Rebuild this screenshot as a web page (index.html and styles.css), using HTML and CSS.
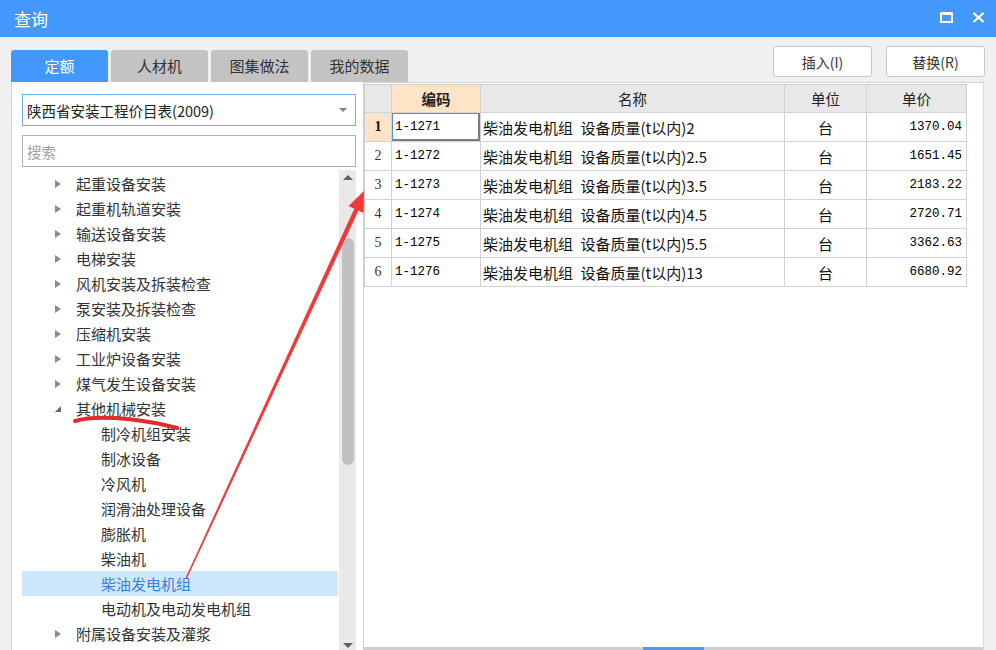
FILE: index.html
```html
<!DOCTYPE html>
<html lang="zh">
<head>
<meta charset="utf-8">
<title>查询</title>
<link rel="stylesheet" href="styles.css">
</head>
<body>
<div class="titlebar">
  <span class="title">查询</span>
  <div class="winctl">
    <svg class="ico-max" width="13" height="11" viewBox="0 0 13 11"><path d="M1 1.5H12V10H1Z" fill="none" stroke="#fff" stroke-width="2"/><path d="M1 1.5H12" stroke="#fff" stroke-width="3"/></svg>
    <svg class="ico-close" width="13" height="11" viewBox="0 0 13 11"><path d="M1.5 1L11.5 10M11.5 1L1.5 10" stroke="#fff" stroke-width="2.3"/></svg>
  </div>
</div>
<div class="main">
  <div class="toprow">
    <div class="tabs">
      <div class="tab active">定额</div>
      <div class="tab">人材机</div>
      <div class="tab">图集做法</div>
      <div class="tab">我的数据</div>
    </div>
    <div class="actions">
      <button class="btn">插入(I)</button>
      <button class="btn">替换(R)</button>
    </div>
  </div>
  <div class="content">
    <div class="leftpanel">
      <div class="select"><span class="select-text">陕西省安装工程价目表(2009)</span><i class="caret"></i></div>
      <div class="search"><span class="placeholder">搜索</span></div>
      <div class="treewrap">
        <ul class="tree">
          <li class="node l1"><i class="tog"></i>起重设备安装</li>
          <li class="node l1"><i class="tog"></i>起重机轨道安装</li>
          <li class="node l1"><i class="tog"></i>输送设备安装</li>
          <li class="node l1"><i class="tog"></i>电梯安装</li>
          <li class="node l1"><i class="tog"></i>风机安装及拆装检查</li>
          <li class="node l1"><i class="tog"></i>泵安装及拆装检查</li>
          <li class="node l1"><i class="tog"></i>压缩机安装</li>
          <li class="node l1"><i class="tog"></i>工业炉设备安装</li>
          <li class="node l1"><i class="tog"></i>煤气发生设备安装</li>
          <li class="node l1"><i class="tog open"></i>其他机械安装</li>
          <li class="node l2">制冷机组安装</li>
          <li class="node l2">制冰设备</li>
          <li class="node l2">冷风机</li>
          <li class="node l2">润滑油处理设备</li>
          <li class="node l2">膨胀机</li>
          <li class="node l2">柴油机</li>
          <li class="node l2 selected">柴油发电机组</li>
          <li class="node l2">电动机及电动发电机组</li>
          <li class="node l1"><i class="tog"></i>附属设备安装及灌浆</li>
        </ul>
        <div class="vscroll">
          <i class="up"></i>
          <div class="thumb"></div>
          <i class="down"></i>
        </div>
      </div>
    </div>
    <div class="rightpanel">
      <div class="grid">
        <div class="hd rn"></div>
        <div class="hd code">编码</div>
        <div class="hd">名称</div>
        <div class="hd">单位</div>
        <div class="hd">单价</div>

        <div class="c rn cur">1</div>
        <div class="c code focus">1-1271</div>
        <div class="c name">柴油发电机组&ensp;设备质量(t以内)2</div>
        <div class="c unit">台</div>
        <div class="c price">1370.04</div>

        <div class="c rn">2</div>
        <div class="c code">1-1272</div>
        <div class="c name">柴油发电机组&ensp;设备质量(t以内)2.5</div>
        <div class="c unit">台</div>
        <div class="c price">1651.45</div>

        <div class="c rn">3</div>
        <div class="c code">1-1273</div>
        <div class="c name">柴油发电机组&ensp;设备质量(t以内)3.5</div>
        <div class="c unit">台</div>
        <div class="c price">2183.22</div>

        <div class="c rn">4</div>
        <div class="c code">1-1274</div>
        <div class="c name">柴油发电机组&ensp;设备质量(t以内)4.5</div>
        <div class="c unit">台</div>
        <div class="c price">2720.71</div>

        <div class="c rn">5</div>
        <div class="c code">1-1275</div>
        <div class="c name">柴油发电机组&ensp;设备质量(t以内)5.5</div>
        <div class="c unit">台</div>
        <div class="c price">3362.63</div>

        <div class="c rn">6</div>
        <div class="c code">1-1276</div>
        <div class="c name">柴油发电机组&ensp;设备质量(t以内)13</div>
        <div class="c unit">台</div>
        <div class="c price">6680.92</div>
      </div>
      <div class="fill"></div>
      <div class="hscroll"><div class="hthumb"></div></div>
    </div>
  </div>
</div>
<svg class="annot" width="996" height="650" viewBox="0 0 996 650">
  <path d="M75 421 C88 417 108 417 128 419 C146 421 162 424 177 428" fill="none" stroke="#e32b2b" stroke-width="4" stroke-linecap="round"/>
  <polygon points="185.4,578.2 186.8,578.8 358.6,210.2 354.4,208.4" fill="#f03a3a"/>
  <polygon points="364,191 363.5,213 348.5,206" fill="#f03a3a"/>
</svg>
</body>
</html>
```

FILE: styles.css
```css
* { box-sizing: border-box; }
html, body { margin: 0; padding: 0; }
body {
  width: 996px;
  height: 650px;
  overflow: hidden;
  background: #f0f0f0;
  font-family: "Noto Sans CJK SC", "Noto Sans", sans-serif;
  color: #333;
  position: relative;
}

/* title bar */
.titlebar {
  height: 37px;
  background: #4398fe;
  display: flex;
  align-items: center;
  padding: 0 11px 0 14px;
}
.title {
  color: #fff;
  font-size: 17px;
  line-height: 37px;
}
.winctl {
  margin-left: auto;
  display: flex;
  align-items: center;
  gap: 19px;
  margin-top: -3px;
}
.winctl svg { display: block; }

/* main */
.main {
  padding: 0 11px;
  height: 613px;
  display: flex;
  flex-direction: column;
}
.toprow {
  height: 45px;
  display: flex;
  align-items: flex-start;
}
.tabs {
  display: flex;
  gap: 3px;
  margin-top: 13px;
}
.tab {
  width: 97px;
  height: 32px;
  line-height: 32px;
  text-align: center;
  font-size: 15px;
  background: #c3c3c3;
  color: #333;
  border-radius: 3px 3px 0 0;
}
.tab.active {
  background: #4398fe;
  color: #fff;
}
.actions {
  margin-left: auto;
  margin-top: 9px;
  display: flex;
  gap: 14px;
}
.btn {
  width: 99px;
  height: 31px;
  background: #fff;
  border: 1px solid #c8c8c8;
  border-radius: 3px;
  font-family: "Noto Sans CJK SC", sans-serif;
  font-size: 14px;
  color: #333;
  padding: 0;
}

/* content */
.content {
  flex: 1;
  display: flex;
  min-height: 0;
}
.leftpanel {
  width: 353px;
  background: #fff;
  border-left: 1px solid #d6d6d6;
  border-right: 1px solid #cfcfcf;
  display: flex;
  flex-direction: column;
  padding: 12px 7px 0 10px;
}
.select {
  height: 32px;
  border: 1px solid #74acf0;
  display: flex;
  align-items: center;
  padding-left: 4px;
  padding-right: 8px;
}
.select-text {
  font-size: 14.5px;
  color: #222;
}
.caret {
  margin-left: auto;
  width: 0;
  height: 0;
  border-left: 4px solid transparent;
  border-right: 4px solid transparent;
  border-top: 4px solid #808080;
}
.search {
  margin-top: 9px;
  height: 32px;
  border: 1px solid #b3b3b3;
  display: flex;
  align-items: center;
  padding-left: 4px;
}
.placeholder {
  font-size: 14.5px;
  color: #a0a0a0;
}
.treewrap {
  margin-top: 3px;
  flex: 1;
  display: flex;
  min-height: 0;
  overflow: hidden;
}
.tree {
  list-style: none;
  margin: 0;
  padding: 1px 0 0 0;
  width: 317px;
}
.node {
  height: 25px;
  line-height: 25px;
  font-size: 15px;
  color: #333;
  display: flex;
  align-items: center;
  white-space: nowrap;
}
.node.l1 { padding-left: 33px; }
.node.l2 { padding-left: 79px; }
.node.selected {
  background: #cce8ff;
  color: #3b7ed9;
}
.tog {
  width: 0;
  height: 0;
  border-top: 4px solid transparent;
  border-bottom: 4px solid transparent;
  border-left: 6px solid #8a8a8a;
  margin-right: 15px;
}
.tog.open {
  border-top: none;
  border-left: 6px solid transparent;
  border-bottom: 6px solid #666;
  margin-top: 1px;
}
.vscroll {
  width: 17px;
  margin-left: 1px;
  background: #e9e9e9;
  display: flex;
  flex-direction: column;
  align-items: center;
}
.vscroll .up {
  margin-top: 5px;
  width: 0;
  height: 0;
  border-left: 5px solid transparent;
  border-right: 5px solid transparent;
  border-bottom: 5px solid #606060;
}
.vscroll .thumb {
  margin-top: 58px;
  width: 12px;
  height: 227px;
  border-radius: 6px;
  background: #c1c1c1;
}
.vscroll .down {
  margin-top: auto;
  margin-bottom: 2px;
  width: 0;
  height: 0;
  border-left: 5px solid transparent;
  border-right: 5px solid transparent;
  border-top: 5px solid #606060;
}

/* right grid */
.rightpanel {
  flex: 1;
  margin-right: 1px;
  background: #fff;
  border-top: 1px solid #d4d4d4;
  border-right: 1px solid #dadada;
  display: flex;
  flex-direction: column;
  padding-top: 1px;
}
.grid {
  display: grid;
  grid-template-columns: 27px 89px 304px 82px 100px;
  grid-auto-rows: 29px;
  width: 603px;
  border-left: 1px solid #cfcfcf;
  border-top: 1px solid #cfcfcf;
  grid-template-rows: 28px;
}
.hd, .c {
  border-right: 1px solid #d2d2d2;
  border-bottom: 1px solid #d2d2d2;
  display: flex;
  align-items: center;
  white-space: nowrap;
  overflow: hidden;
}
.hd {
  background: #e8e8e8;
  justify-content: center;
  font-size: 14.5px;
  color: #222;
}
.hd.code {
  background: #fde4c7;
  font-weight: bold;
}
.c {
  color: #111;
  font-size: 14px;
}
.c.rn {
  justify-content: center;
  font-family: "Liberation Serif", serif;
  font-size: 14px;
  color: #333;
}
.c.rn.cur {
  background: #fde4c7;
  font-weight: bold;
  color: #111;
}
.c.code {
  padding-left: 3px;
  font-family: "Liberation Mono", "DejaVu Sans Mono", monospace;
  font-size: 12.5px;
  color: #000;
}
.c.code.focus {
  box-shadow: inset 1px 1px 0 #4a90e2, inset -2px -2px 0 #7d7d7d;
}
.c.name {
  padding-left: 2px;
  font-size: 15px;
}
.c.unit {
  justify-content: center;
  font-size: 15px;
}
.c.price {
  justify-content: flex-end;
  padding-right: 4px;
  font-family: "Liberation Mono", "DejaVu Sans Mono", monospace;
  font-size: 12.5px;
  color: #000;
}
.fill { flex: 1; }
.hscroll {
  height: 3px;
  background: #cfcfcf;
  display: flex;
}
.hthumb {
  margin-left: 279px;
  width: 61px;
  background: #4a9af5;
}

/* annotation overlay */
.annot {
  position: absolute;
  left: 0;
  top: 0;
  pointer-events: none;
}
```
